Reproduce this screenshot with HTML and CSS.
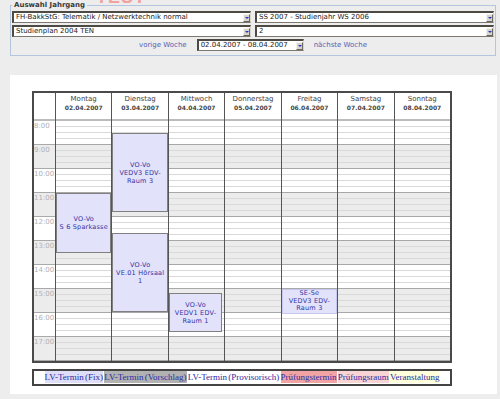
FILE: index.html
```html
<!DOCTYPE html>
<html lang="de">
<head>
    <meta charset="UTF-8">
    <title>Stundenplan</title>
    <link rel="stylesheet" href="styles.css">
</head>
<body>
    <div class="watermark">TEST</div>

    <fieldset class="selection">
        <legend>Auswahl Jahrgang</legend>
        <div class="select-grid">
            <div class="select"><span class="select-value">FH-BakkStG: Telematik / Netzwerktechnik normal</span><span class="select-arrow"></span></div>
            <div class="select"><span class="select-value">SS 2007 - Studienjahr WS 2006</span><span class="select-arrow"></span></div>
            <div class="select"><span class="select-value">Studienplan 2004 TEN</span><span class="select-arrow"></span></div>
            <div class="select"><span class="select-value">2</span><span class="select-arrow"></span></div>
        </div>
        <div class="week-nav">
            <a href="#" class="week-link">vorige Woche</a>
            <div class="select date-select"><span class="select-value">02.04.2007 - 08.04.2007</span><span class="select-arrow"></span></div>
            <a href="#" class="week-link">nächste Woche</a>
        </div>
    </fieldset>

    <div class="panel">
        <div class="calendar">
            <div class="cal-head corner"></div>
            <div class="cal-head"><span class="day-name">Montag</span><span class="day-date">02.04.2007</span></div>
            <div class="cal-head"><span class="day-name">Dienstag</span><span class="day-date">03.04.2007</span></div>
            <div class="cal-head"><span class="day-name">Mittwoch</span><span class="day-date">04.04.2007</span></div>
            <div class="cal-head"><span class="day-name">Donnerstag</span><span class="day-date">05.04.2007</span></div>
            <div class="cal-head"><span class="day-name">Freitag</span><span class="day-date">06.04.2007</span></div>
            <div class="cal-head"><span class="day-name">Samstag</span><span class="day-date">07.04.2007</span></div>
            <div class="cal-head"><span class="day-name">Sonntag</span><span class="day-date">08.04.2007</span></div>

            <div class="time-col">
                <div class="hour">8:00</div>
                <div class="hour odd">9:00</div>
                <div class="hour">10:00</div>
                <div class="hour odd">11:00</div>
                <div class="hour">12:00</div>
                <div class="hour odd">13:00</div>
                <div class="hour">14:00</div>
                <div class="hour odd">15:00</div>
                <div class="hour">16:00</div>
                <div class="hour odd">17:00</div>
            </div>

            <!-- Montag -->
            <div class="day-col">
                <div class="event" style="top: 72px; height: 60px;">VO-Vo<br>S 6 Sparkasse</div>
            </div>
            <!-- Dienstag -->
            <div class="day-col">
                <div class="event" style="top: 12px; height: 79px;">VO-Vo<br>VEDV3 EDV-<br>Raum 3</div>
                <div class="event" style="top: 112px; height: 79px;">VO-Vo<br>VE.01 Hörsaal<br>1</div>
            </div>
            <!-- Mittwoch -->
            <div class="day-col">
                <div class="event narrow" style="top: 172px; height: 39px;">VO-Vo<br>VEDV1 EDV-<br>Raum 1</div>
            </div>
            <!-- Donnerstag -->
            <div class="day-col"></div>
            <!-- Freitag -->
            <div class="day-col">
                <div class="event flat" style="top: 168px; height: 25px;">SE-Se<br>VEDV3 EDV-<br>Raum 3</div>
            </div>
            <!-- Samstag -->
            <div class="day-col"></div>
            <!-- Sonntag -->
            <div class="day-col"></div>
        </div>

        <div class="legend-box">
            <span class="lg lg-fix">LV-Termin (Fix)</span> <span class="lg lg-proposal">LV-Termin (Vorschlag)</span> <span class="lg">LV-Termin (Provisorisch)</span> <span class="lg lg-exam">Prüfungstermin</span> <span class="lg lg-room">Prüfungsraum</span> <span class="lg lg-event">Veranstaltung</span>
        </div>
    </div>
</body>
</html>
```

FILE: styles.css
```css
body {
    margin: 0;
    background-color: #ededed;
    font-family: "DejaVu Sans", Verdana, sans-serif;
    font-size: 7px;
    color: #333;
    position: relative;
}

.watermark {
    position: absolute;
    left: 96px;
    top: -12px;
    font-family: "Liberation Sans", Arial, sans-serif;
    font-size: 18px;
    line-height: 18px;
    font-weight: bold;
    color: #f3a2a2;
    letter-spacing: 1px;
}

/* Auswahl */
.selection {
    position: relative;
    margin: 0 4px 0 10px;
    padding: 1px 1px 4px 1px;
    border: 1px solid #b4c6de;
    min-width: 0;
}

.selection legend {
    padding: 0 2px;
    font-size: 7px;
    line-height: 10px;
    font-weight: bold;
    color: #3a3a3a;
}

.select-grid {
    display: grid;
    grid-template-columns: 1fr 1fr;
    gap: 2px 4px;
}

.select {
    display: flex;
    align-items: center;
    height: 12px;
    box-sizing: border-box;
    background: white;
    border-top: 2px solid #4d4a44;
    border-left: 2px solid #4d4a44;
    border-right: 1px solid #d8d4cc;
    border-bottom: 1px solid #7c7870;
}

.select-value {
    flex: 1;
    padding-left: 2px;
    white-space: nowrap;
    overflow: hidden;
    color: #222;
    line-height: 9px;
}

.select-arrow {
    width: 7px;
    height: 8px;
    background: #d8d4cc;
    border: 1px solid;
    border-color: #f4f2ee #6c6860 #6c6860 #f4f2ee;
    box-sizing: border-box;
    position: relative;
}

.select-arrow::after {
    content: "";
    position: absolute;
    left: 1px;
    top: 2px;
    border-left: 2px solid transparent;
    border-right: 2px solid transparent;
    border-top: 2px solid #1c3ccc;
}

.week-nav {
    display: flex;
    justify-content: center;
    align-items: center;
    gap: 10px;
    margin-top: 2px;
}

.date-select {
    width: 107px;
}

.week-link {
    color: #5262b4;
    text-decoration: none;
}

/* Stundenplan */
.panel {
    margin: 19px 3px 0 10px;
    padding: 16px 45px 8px 22px;
    background: white;
}

.calendar {
    display: grid;
    grid-template-columns: 21px repeat(7, 1fr);
    column-gap: 1px;
    background: #555;
    border: 2px solid #4a4a4a;
}

.cal-head {
    display: flex;
    flex-direction: column;
    align-items: center;
    height: 26px;
    padding-top: 2px;
    box-sizing: border-box;
    background: white;
}

.day-name {
    font-size: 7px;
    line-height: 9px;
    color: #444;
}

.day-date {
    font-size: 6px;
    line-height: 8px;
    font-weight: bold;
    color: #444;
}

.time-col {
    border-top: 2px solid #bcbcbc;
}

.hour {
    height: 24px;
    box-sizing: border-box;
    border-bottom: 1px solid #aaa;
    background: white;
    color: #b0b0b0;
    padding-top: 1px;
    line-height: 8px;
}

.hour.odd {
    background: #ececec;
}

.day-col {
    position: relative;
    height: 240px;
    border-top: 2px solid #bcbcbc;
    background-image:
        repeating-linear-gradient(to bottom, transparent 0 23px, #a8a8a8 23px 24px),
        repeating-linear-gradient(to bottom, transparent 0 5px, #d9d9d9 5px 6px),
        repeating-linear-gradient(to bottom, #fff 0 24px, #ececec 24px 48px);
}

.event {
    position: absolute;
    left: 0;
    right: 0;
    display: flex;
    align-items: center;
    justify-content: center;
    text-align: center;
    box-sizing: border-box;
    background: #e2e2fa;
    border: 1px solid #808080;
    color: #3434a4;
    font-size: 6.5px;
    line-height: 8px;
    letter-spacing: 0.2px;
}

.event.narrow {
    right: 2px;
}

.event.flat {
    border-color: #c8c8ee;
    line-height: 7.5px;
}

/* Legende */
.legend-box {
    margin-top: 6px;
    height: 17px;
    box-sizing: border-box;
    border: 2px solid #444;
    text-align: center;
    font-family: "Liberation Serif", "Times New Roman", serif;
    font-size: 9px;
    line-height: 13px;
    color: #2c2ca4;
    white-space: nowrap;
    word-spacing: -1px;
}

.lg {
    padding: 1px 0;
}

.lg-fix {
    background: #dedef8;
}

.lg-proposal {
    background: #b2b2b2;
}

.lg-exam {
    background: #f2a4a4;
}

.lg-room {
    background: #f8d4d4;
}

.lg-event {
    background: #ffffdc;
}
```
